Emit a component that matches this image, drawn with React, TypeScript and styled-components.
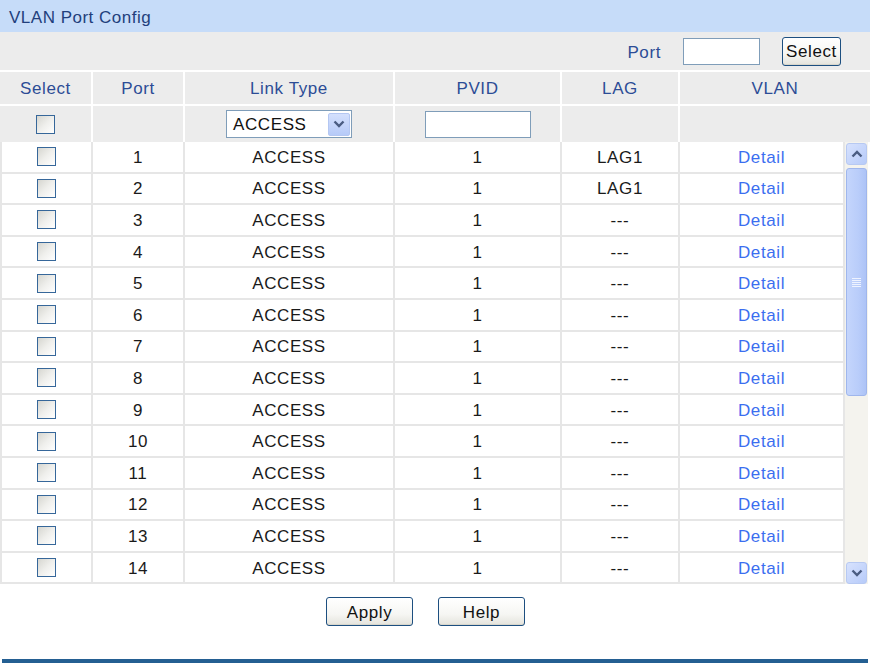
import React from "react";
import styled, { createGlobalStyle } from "styled-components";

const Global = createGlobalStyle`
  html, body { margin: 0; padding: 0; background: #ffffff; }
  body { font-family: "Liberation Sans", Arial, sans-serif; font-size: 17px; letter-spacing: 0.6px; color: #1a1a1a; }
  * { box-sizing: border-box; }
`;

const Page = styled.div`
  width: 870px;
  display: flex;
  flex-direction: column;
`;

const TitleBar = styled.div`
  height: 32px;
  background: #c6dcf9;
  color: #223f7c;
  display: flex;
  align-items: center;
  padding: 3px 0 0 9px;
  letter-spacing: 0.5px;
`;

const Toolbar = styled.div`
  height: 38px;
  background: #ececec;
  display: flex;
  align-items: center;
  justify-content: flex-end;
  padding-right: 29px;
  gap: 22px;
  border-bottom: 2px solid #ffffff;
  box-sizing: content-box;
`;

const Label = styled.span`
  color: #2c4c96;
  padding-top: 3px;
`;

const TextInput = styled.div<{ $w: number }>`
  width: ${(p) => p.$w}px;
  height: 27px;
  background: #ffffff;
  border: 1px solid #7f9db9;
`;

const XPButton = styled.button<{ $w: number }>`
  width: ${(p) => p.$w}px;
  height: 29px;
  padding: 2px 0 0 0;
  font-family: "Liberation Sans", Arial, sans-serif;
  font-size: 17px;
  letter-spacing: 0.6px;
  color: #111;
  border: 1px solid #1d4f80;
  border-radius: 3px;
  background: linear-gradient(#ffffff 0%, #f6f6f3 60%, #e4e3dc 100%);
  box-shadow: inset 0 -1px 0 #d8d6cc;
`;

const HeadGrid = styled.div`
  display: grid;
  grid-template-columns: 91px 90px 208px 165px 116px 190px;
  column-gap: 2px;
  row-gap: 2px;
  background: #ffffff;
  grid-template-rows: 32px 36px;
`;

const HeadCell = styled.div<{ $head?: boolean }>`
  background: #ececec;
  display: flex;
  align-items: center;
  justify-content: center;
  padding-top: ${(p) => (p.$head ? "2px" : "0")};
  color: ${(p) => (p.$head ? "#2c4c96" : "#1a1a1a")};
`;

const Check = styled.span`
  display: inline-block;
  width: 19px;
  height: 19px;
  border: 1px solid #36679a;
  background: linear-gradient(135deg, #d6d6d0 0%, #efefec 50%, #ffffff 100%);
`;

const SelectBox = styled.div`
  width: 126px;
  height: 28px;
  border: 1px solid #7f9db9;
  background: #ffffff;
  display: flex;
  align-items: center;
  justify-content: space-between;
  padding: 0 1px 0 6px;
  color: #111;
`;

const SelectText = styled.span`
  padding-top: 2px;
`;

const DropButton = styled.span`
  width: 22px;
  height: 23px;
  border: 1px solid #b4c7f2;
  border-radius: 2px;
  background: linear-gradient(#d4e0fd, #b6caf8);
  display: flex;
  align-items: center;
  justify-content: center;
`;

const Body = styled.div`
  display: flex;
  height: 442px;
`;

const DataPane = styled.div`
  width: 845px;
  overflow: hidden;
  border-left: 2px solid #e6e6e6;
  border-right: 2px solid #e6e6e6;
  background: #e6e6e6;
`;

const DataRow = styled.div`
  display: grid;
  grid-template-columns: 89px 90px 208px 165px 116px 1fr;
  column-gap: 2px;
  height: 31.6px;
  padding-bottom: 2px;
  background: #e6e6e6;
`;

const DataCell = styled.div`
  background: #ffffff;
  display: flex;
  align-items: center;
  justify-content: center;
  padding-top: 2px;
  color: #1a1a1a;
`;

const CheckCell = styled(DataCell)`
  padding-top: 0;
`;

const DetailLink = styled.span`
  color: #3b6ef0;
`;

const ScrollBar = styled.div`
  width: 23px;
  display: flex;
  flex-direction: column;
  background: #f4f3ee;
  padding: 1px 1px 0 1px;
`;

const ScrollBtn = styled.div`
  height: 22px;
  border: 1px solid #b7c9f2;
  border-radius: 3px;
  background: linear-gradient(135deg, #d7e2fe, #b7cbf9);
  display: flex;
  align-items: center;
  justify-content: center;
`;

const Thumb = styled.div`
  margin-top: 3px;
  height: 228px;
  border: 1px solid #9fb6ec;
  border-radius: 3px;
  background: linear-gradient(90deg, #c4d5fc, #b9cdfa 60%, #adc3f6);
  display: flex;
  align-items: center;
  justify-content: center;
`;

const Track = styled.div`
  flex: 1;
`;

const ButtonBar = styled.div`
  display: flex;
  justify-content: center;
  gap: 25px;
  padding-right: 19px;
  margin-top: 13px;
`;

const BottomRule = styled.div`
  margin: 33px 2px 0 2px;
  height: 4px;
  background: #245f92;
`;

const Chevron = ({ up }: { up?: boolean }) => (
  <svg width="12" height="8" viewBox="0 0 12 8">
    <path
      d={up ? "M1.5 6.5 L6 2 L10.5 6.5" : "M1.5 1.5 L6 6 L10.5 1.5"}
      fill="none"
      stroke="#4a5c82"
      strokeWidth="2.4"
    />
  </svg>
);

const Grip = () => (
  <svg width="9" height="9" viewBox="0 0 9 9">
    {[0.5, 2.5, 4.5, 6.5, 8.5].map((y) => (
      <line key={y} x1="0" x2="9" y1={y} y2={y} stroke="#eef3ff" strokeWidth="1" />
    ))}
  </svg>
);

const ports = Array.from({ length: 14 }, (_, i) => i + 1);

export default function App() {
  return (
    <Page>
      <Global />
      <TitleBar>VLAN Port Config</TitleBar>
      <Toolbar>
        <Label>Port</Label>
        <TextInput $w={77} />
        <XPButton $w={59}>Select</XPButton>
      </Toolbar>
      <HeadGrid>
        <HeadCell $head>Select</HeadCell>
        <HeadCell $head>Port</HeadCell>
        <HeadCell $head>Link Type</HeadCell>
        <HeadCell $head>PVID</HeadCell>
        <HeadCell $head>LAG</HeadCell>
        <HeadCell $head>VLAN</HeadCell>
        <HeadCell>
          <Check />
        </HeadCell>
        <HeadCell />
        <HeadCell>
          <SelectBox>
            <SelectText>ACCESS</SelectText>
            <DropButton>
              <Chevron />
            </DropButton>
          </SelectBox>
        </HeadCell>
        <HeadCell>
          <TextInput $w={106} />
        </HeadCell>
        <HeadCell />
        <HeadCell />
      </HeadGrid>
      <Body>
        <DataPane>
          {ports.map((p) => (
            <DataRow key={p}>
              <CheckCell>
                <Check />
              </CheckCell>
              <DataCell>{p}</DataCell>
              <DataCell>ACCESS</DataCell>
              <DataCell>1</DataCell>
              <DataCell>{p <= 2 ? "LAG1" : "---"}</DataCell>
              <DataCell>
                <DetailLink>Detail</DetailLink>
              </DataCell>
            </DataRow>
          ))}
        </DataPane>
        <ScrollBar>
          <ScrollBtn>
            <Chevron up />
          </ScrollBtn>
          <Thumb>
            <Grip />
          </Thumb>
          <Track />
          <ScrollBtn>
            <Chevron />
          </ScrollBtn>
        </ScrollBar>
      </Body>
      <ButtonBar>
        <XPButton $w={87}>Apply</XPButton>
        <XPButton $w={87}>Help</XPButton>
      </ButtonBar>
      <BottomRule />
    </Page>
  );
}
